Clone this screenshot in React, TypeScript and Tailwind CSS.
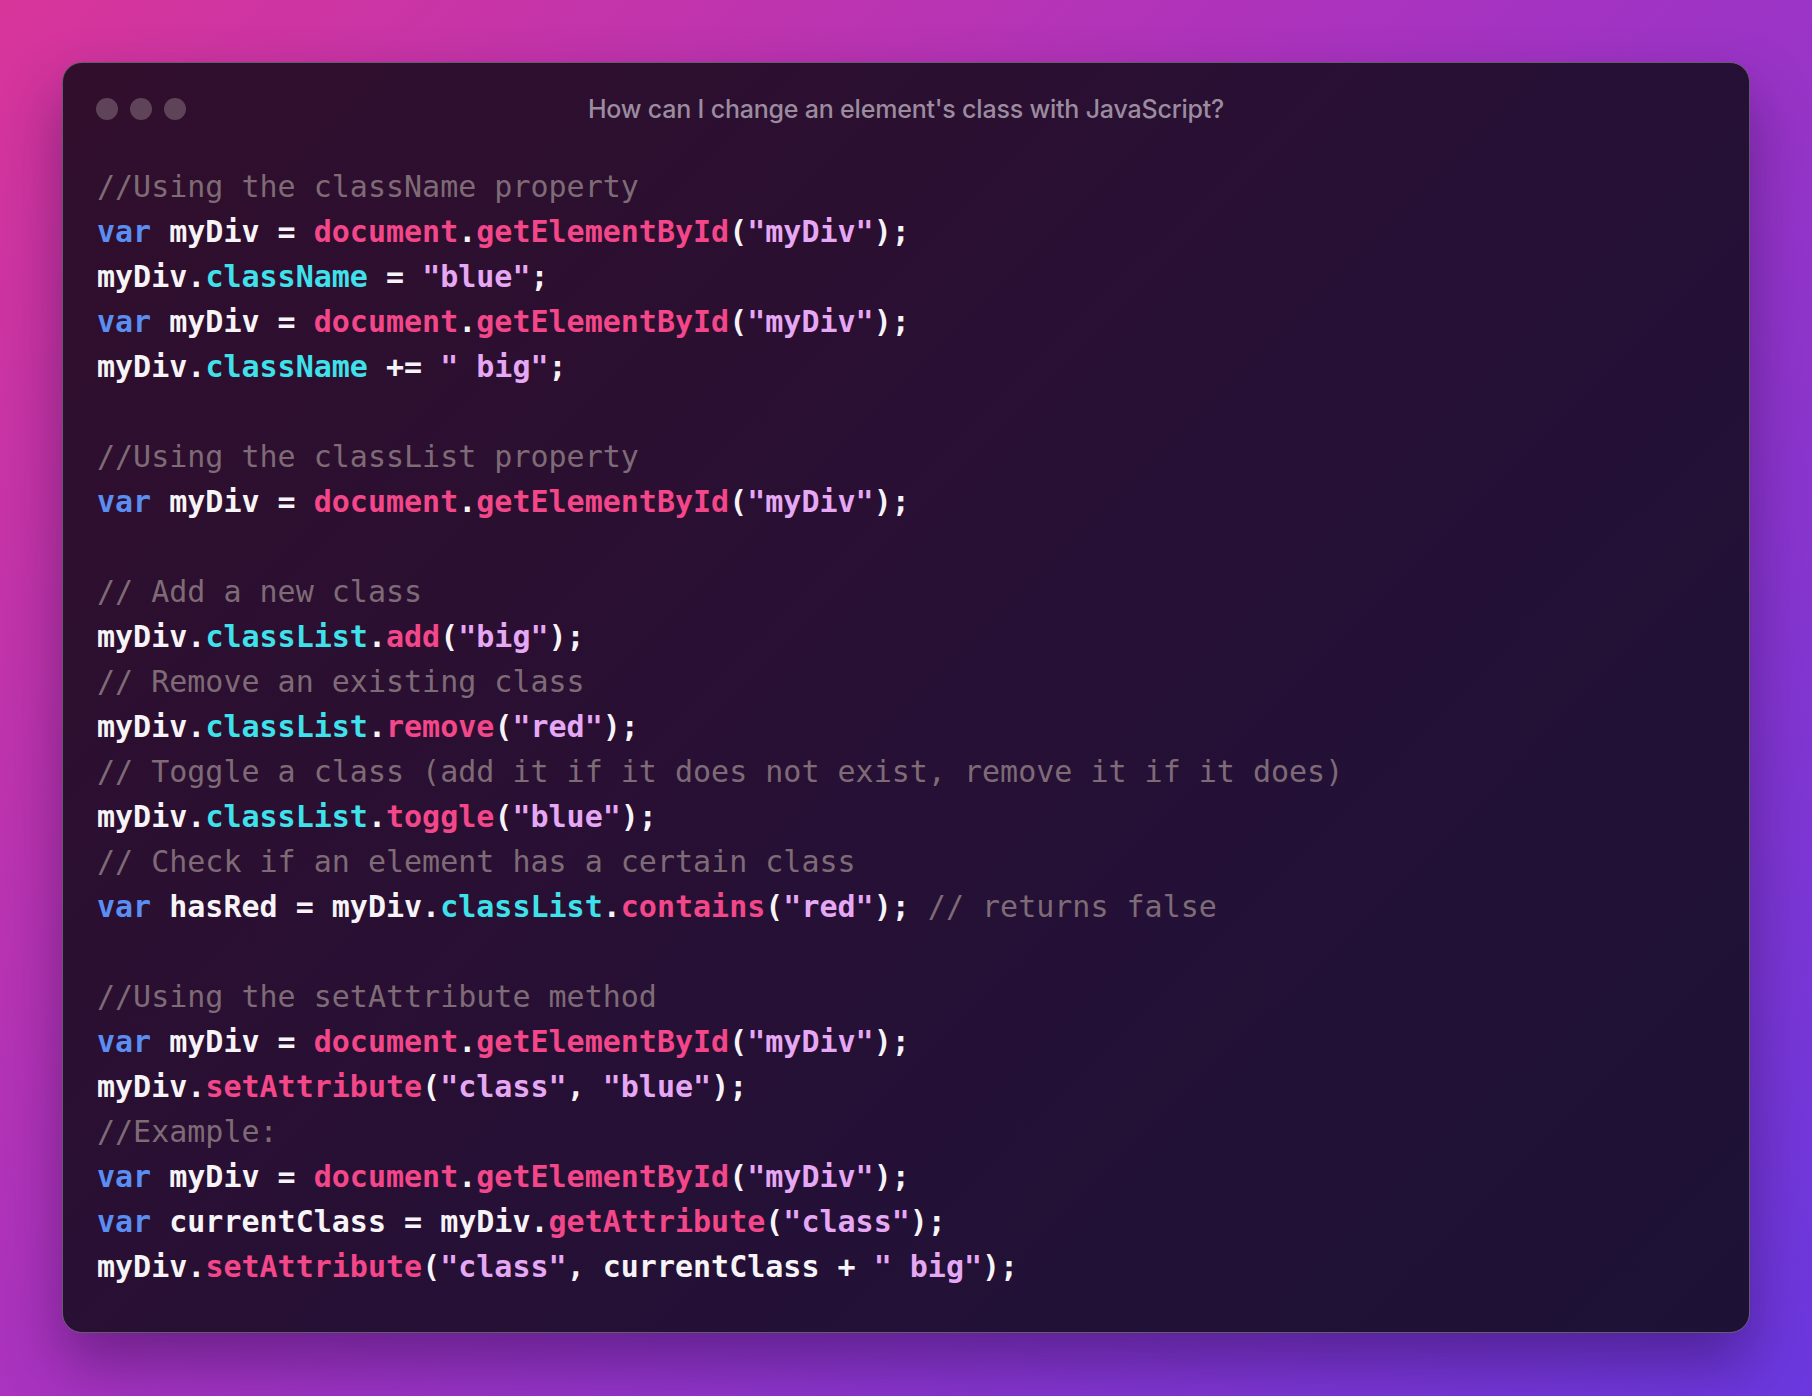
type Tok = [string, string];

const C = {
  kw: "text-[#5b8ef2] font-bold",
  id: "text-[#f7f4f8] font-bold",
  fn: "text-[#f4478a] font-bold",
  prop: "text-[#3fe2ea] font-bold",
  str: "text-[#e6a8f4] font-bold",
  cm: "text-[#7e6b76] font-normal",
};

const lines: Tok[][] = [
  [["//Using the className property", C.cm]],
  [["var", C.kw], [" myDiv = ", C.id], ["document", C.fn], [".", C.id], ["getElementById", C.fn], ["(", C.id], ['"myDiv"', C.str], [");", C.id]],
  [["myDiv.", C.id], ["className", C.prop], [" = ", C.id], ['"blue"', C.str], [";", C.id]],
  [["var", C.kw], [" myDiv = ", C.id], ["document", C.fn], [".", C.id], ["getElementById", C.fn], ["(", C.id], ['"myDiv"', C.str], [");", C.id]],
  [["myDiv.", C.id], ["className", C.prop], [" += ", C.id], ['" big"', C.str], [";", C.id]],
  [],
  [["//Using the classList property", C.cm]],
  [["var", C.kw], [" myDiv = ", C.id], ["document", C.fn], [".", C.id], ["getElementById", C.fn], ["(", C.id], ['"myDiv"', C.str], [");", C.id]],
  [],
  [["// Add a new class", C.cm]],
  [["myDiv.", C.id], ["classList", C.prop], [".", C.id], ["add", C.fn], ["(", C.id], ['"big"', C.str], [");", C.id]],
  [["// Remove an existing class", C.cm]],
  [["myDiv.", C.id], ["classList", C.prop], [".", C.id], ["remove", C.fn], ["(", C.id], ['"red"', C.str], [");", C.id]],
  [["// Toggle a class (add it if it does not exist, remove it if it does)", C.cm]],
  [["myDiv.", C.id], ["classList", C.prop], [".", C.id], ["toggle", C.fn], ["(", C.id], ['"blue"', C.str], [");", C.id]],
  [["// Check if an element has a certain class", C.cm]],
  [["var", C.kw], [" hasRed = myDiv.", C.id], ["classList", C.prop], [".", C.id], ["contains", C.fn], ["(", C.id], ['"red"', C.str], [");", C.id], [" // returns false", C.cm]],
  [],
  [["//Using the setAttribute method", C.cm]],
  [["var", C.kw], [" myDiv = ", C.id], ["document", C.fn], [".", C.id], ["getElementById", C.fn], ["(", C.id], ['"myDiv"', C.str], [");", C.id]],
  [["myDiv.", C.id], ["setAttribute", C.fn], ["(", C.id], ['"class"', C.str], [", ", C.id], ['"blue"', C.str], [");", C.id]],
  [["//Example:", C.cm]],
  [["var", C.kw], [" myDiv = ", C.id], ["document", C.fn], [".", C.id], ["getElementById", C.fn], ["(", C.id], ['"myDiv"', C.str], [");", C.id]],
  [["var", C.kw], [" currentClass = myDiv.", C.id], ["getAttribute", C.fn], ["(", C.id], ['"class"', C.str], [");", C.id]],
  [["myDiv.", C.id], ["setAttribute", C.fn], ["(", C.id], ['"class"', C.str], [", currentClass + ", C.id], ['" big"', C.str], [");", C.id]],
];

export default function App() {
  return (
    <main className="w-[1812px] h-[1396px] bg-[linear-gradient(135deg,#d8359a_0%,#a833c0_45%,#6a38df_100%)] pt-[62px] px-[62px]">
      <div className="h-[1271px] rounded-[20px] border-[1.5px] border-[#665b6e] bg-[linear-gradient(135deg,#310e2c_0%,#251036_60%,#1d1236_100%)] shadow-[0_30px_60px_rgba(40,10,70,0.45)] overflow-hidden">
        {/* title bar */}
        <div className="relative h-[92px] flex items-center pl-[33px]">
          <div className="flex gap-[12px]">
            <span className="w-[22px] h-[22px] rounded-full bg-[#5f4459]" />
            <span className="w-[22px] h-[22px] rounded-full bg-[#5f4459]" />
            <span className="w-[22px] h-[22px] rounded-full bg-[#5f4459]" />
          </div>
          <div className="absolute inset-x-0 top-0 h-[92px] flex items-center justify-center pt-[2px] text-[25px] tracking-[-0.2px] text-[#9b8c9f] font-['Inter',sans-serif] font-medium">
            How can I change an element's class with JavaScript?
          </div>
        </div>

        <pre className="pl-[34px] pt-[9px] font-['DejaVu_Sans_Mono',monospace] text-[30px] leading-[45px]">
          {lines.map((l, i) => (
            <div key={i} className="h-[45px] whitespace-pre">
              {l.map(([t, c], j) => (
                <span key={j} className={c}>{t}</span>
              ))}
            </div>
          ))}
        </pre>
      </div>
    </main>
  );
}
